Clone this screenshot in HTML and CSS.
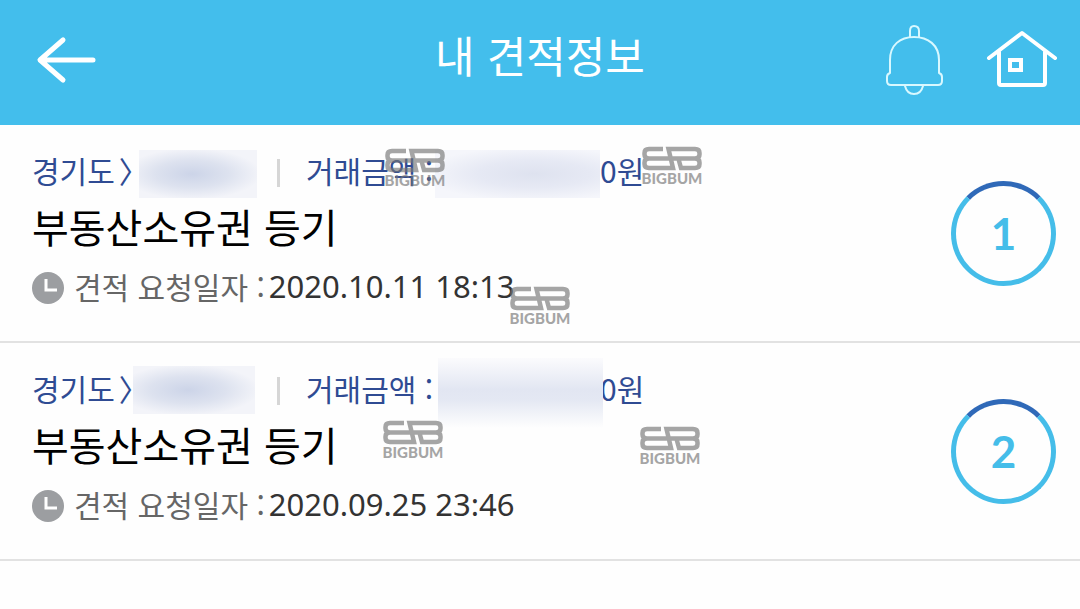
FILE: index.html
```
<!DOCTYPE html>
<html lang="ko">
<head>
    <meta charset="utf-8">
    <meta name="viewport" content="width=device-width, initial-scale=1">
    <title>내 견적정보</title>
    <link rel="stylesheet" href="styles.css">
</head>
<body>
    <svg class="defs" aria-hidden="true">
        <symbol id="bigbum" viewBox="0 0 60 38">
            <path d="M21 3H7Q2.500 3 2.500 7V8.500Q2.500 12.500 7 12.500Q2.500 12.500 2.500 16.500V18Q2.500 22 7 22H31L26.500 3H53Q57.500 3 57.500 7V8.500Q57.500 12.500 53 12.500Q57.500 12.500 57.500 16.500V18Q57.500 22 53 22H39L36.500 13M6 12.500H54" fill="none" stroke="currentColor" stroke-width="4.500"/>
            <text x="30" y="38" text-anchor="middle">BIGBUM</text>
        </symbol>
    </svg>

    <header class="header">
        <button class="back" type="button" aria-label="뒤로">
            <svg width="60" height="48" viewBox="0 0 60 48">
                <path d="M27 4L4 24L27 44M5 24H57" />
            </svg>
        </button>
        <h1 class="page-title">내 견적정보</h1>
        <nav class="header-menu">
            <a href="#alarm" aria-label="알림">
                <svg class="bell" width="60" height="72" viewBox="0 0 60 72">
                    <path d="M26 13V7Q26 2 30 2Q35 2 35 7V13M6 49V36C6 21 16 13 30 13S55 21 55 36V49Q58 50 58 53V57Q58 61 54 61H7Q3 61 3 57V53Q3 50 6 49M21 62Q23 70 30 70T39 62" />
                </svg>
            </a>
            <a href="#home" aria-label="홈">
                <svg class="house" width="72" height="60" viewBox="0 0 72 60">
                    <path d="M3 28L36 3L69 28M13 22V53Q13 55 15 55H57Q59 55 59 53V22" />
                    <path class="window" d="M24 30H35V40H24Z" />
                </svg>
            </a>
        </nav>
    </header>

    <main>
        <ul class="quote-list">
            <li class="quote">
                <div class="quote-info">
                    <div class="meta">
                        <span class="region">경기도<span class="arrow">〉</span><i class="mask mask-region"></i></span>
                        <span class="price">거래금액 :<i class="mask mask-price"></i></span>
                        <span class="won">0원</span>
                    </div>
                    <h2 class="quote-title">부동산소유권 등기</h2>
                    <p class="date">
                        <svg width="32" height="32" viewBox="0 0 32 32"><circle cx="16" cy="16" r="16"/><path d="M14 7V18H25"/></svg>
                        <span>견적 요청일자 :</span>
                        <time datetime="2020-10-11T18:13">2020.10.11 18:13</time>
                    </p>
                </div>
                <div class="count">1</div>
                <svg class="stamp stamp-a"><use href="#bigbum"/></svg>
                <svg class="stamp stamp-b"><use href="#bigbum"/></svg>
                <svg class="stamp stamp-c"><use href="#bigbum"/></svg>
            </li>
            <li class="quote">
                <div class="quote-info">
                    <div class="meta">
                        <span class="region">경기도<span class="arrow">〉</span><i class="mask mask-region wide"></i></span>
                        <span class="price">거래금액 :<i class="mask mask-price tall"></i></span>
                        <span class="won">0원</span>
                    </div>
                    <h2 class="quote-title">부동산소유권 등기</h2>
                    <p class="date">
                        <svg width="32" height="32" viewBox="0 0 32 32"><circle cx="16" cy="16" r="16"/><path d="M14 7V18H25"/></svg>
                        <span>견적 요청일자 :</span>
                        <time datetime="2020-09-25T23:46">2020.09.25 23:46</time>
                    </p>
                </div>
                <div class="count">2</div>
                <svg class="stamp stamp-d"><use href="#bigbum"/></svg>
                <svg class="stamp stamp-e"><use href="#bigbum"/></svg>
            </li>
        </ul>
    </main>
</body>
</html>
```
FILE: styles.css
```
:root {
    --sky: #43beec;
    --ring: #45bde9;
    --ring-dark: #2f69b8;
    --navy: #2f4b93;
    --line: #e2e2e2;
}

* {
    box-sizing: border-box;
}

body {
    margin: 0;
    background: #fefefe;
    color: #000;
    font-family: "Noto Sans CJK KR", sans-serif;
}

.defs {
    display: none;
}

.header {
    display: grid;
    grid-template-columns: 1fr auto 1fr;
    align-items: center;
    height: 125px;
    padding: 0 22px 6px;
    background: var(--sky);
    color: #fff;
}

.back {
    justify-self: start;
    padding: 0 0 0 14px;
    border: 0;
    background: none;
    color: inherit;
}

.header svg {
    display: block;
    fill: none;
    stroke: currentColor;
    stroke-width: 5;
    stroke-linecap: round;
    stroke-linejoin: round;
}

.page-title {
    margin: 0;
    padding-bottom: 12px;
    font-size: 43px;
    font-weight: 400;
    line-height: 64px;
}

.header-menu {
    display: flex;
    align-items: center;
    justify-content: flex-end;
    gap: 42px;
}

.header-menu a {
    color: #fff;
}

.header .bell {
    stroke: #d8f8ff;
    stroke-width: 2;
}

.header .house {
    stroke-width: 4;
}

.house .window {
    stroke-linejoin: miter;
}

.quote-list {
    margin: 0;
    padding: 0;
    list-style: none;
}

.quote {
    position: relative;
    display: flex;
    align-items: center;
    justify-content: space-between;
    padding: 0 24px 0 32px;
    border-bottom: 2px solid var(--line);
}

.quote-info {
    padding: 21px 0 27px;
}

.meta {
    display: grid;
    grid-template-columns: 246px 322px auto;
    align-items: center;
    color: var(--navy);
    font-size: 30px;
    line-height: 48px;
}

.region,
.price {
    position: relative;
    white-space: nowrap;
}

.arrow {
    margin-left: 4px;
}

.price {
    padding-left: 28px;
}

.price::before {
    content: "";
    position: absolute;
    top: 13px;
    left: -1px;
    width: 3px;
    height: 28px;
    background: #d6d6d6;
}

/* blurred-out private details */
.mask {
    position: absolute;
    top: 4px;
    height: 48px;
    background-color: #f3f4f9;
}

.mask-region {
    left: 107px;
    width: 118px;
    background-image: radial-gradient(ellipse at 45% 50%, #ccd4e8, #dde2ef 40%, #f3f4f9 75%);
}

.mask-region.wide {
    top: 2px;
    left: 101px;
    width: 122px;
}

.mask-price {
    left: 157px;
    width: 165px;
    background-image: radial-gradient(ellipse at 60% 50%, #dee2ef, #e6e9f4 40%, #f5f6fb 80%);
}

.mask-price.tall {
    top: -6px;
    left: 160px;
    height: 70px;
    background: linear-gradient(#fbfbfd, #e2e6f2 45%, #e4e8f3 60%, #fefefe);
}

.quote-title {
    margin: 0;
    font-size: 40px;
    font-weight: 400;
    line-height: 64px;
}

.date {
    display: flex;
    align-items: center;
    margin: 0;
    color: #666;
    font-size: 30px;
    line-height: 56px;
}

.date svg {
    margin: 4px 10px 0 0;
    fill: #9c9ea1;
}

.date path {
    fill: none;
    stroke: #fff;
    stroke-width: 3;
}

.date time {
    margin-left: 4px;
    color: #333;
    font-family: "Noto Sans", "Noto Sans CJK KR", sans-serif;
    font-size: 31px;
}

.count {
    width: 105px;
    height: 105px;
    border: 5px solid var(--ring);
    border-top-color: var(--ring-dark);
    border-radius: 50%;
    color: var(--ring);
    font-family: Lato, sans-serif;
    font-size: 44px;
    font-weight: 700;
    line-height: 95px;
    text-align: center;
}

/* watermark */
.stamp {
    position: absolute;
    width: 60px;
    height: 38px;
    color: #777;
    fill: currentColor;
    font-family: Lato, sans-serif;
    font-size: 15px;
    font-weight: 900;
    opacity: 0.65;
    pointer-events: none;
}

.stamp-a {
    top: 23px;
    left: 385px;
}

.stamp-b {
    top: 21px;
    left: 642px;
}

.stamp-c {
    top: 161px;
    left: 510px;
}

.stamp-d {
    top: 77px;
    left: 383px;
}

.stamp-e {
    top: 83px;
    left: 640px;
}
```
